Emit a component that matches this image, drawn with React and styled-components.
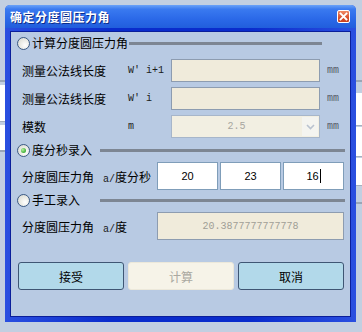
import React from 'react';
import styled, { createGlobalStyle } from 'styled-components';

const GlobalStyle = createGlobalStyle`
  html, body { margin: 0; padding: 0; }
  body {
    width: 362px;
    height: 332px;
    overflow: hidden;
    background: #c2cfe1;
    font-family: "Noto Sans CJK SC", "Liberation Sans", sans-serif;
    font-size: 12px;
    color: #000;
  }
`;

const Desktop = styled.div`
  position: relative;
  width: 362px;
  height: 332px;
  padding-top: 5px;
  box-sizing: border-box;
`;

// bits of the windows lying behind the dialog
const BackPane = styled.div`
  position: absolute;
  left: ${p => p.$left}px;
  top: ${p => p.$top}px;
  width: ${p => p.$w}px;
  height: ${p => p.$h}px;
  background: ${p => (p.$line ? '#9aa6b6' : '#fff')};
  border-bottom: ${p => (p.$line ? 'none' : '1px solid #a6b0be')};
`;

const Window = styled.div`
  position: relative;
  z-index: 1;
  margin-left: 5px;
  width: 351px;
  height: 317px;
  display: flex;
  flex-direction: column;
  background: linear-gradient(90deg, #2a4fe0 0%, #0a2ccc 30%, #0a2ccc 70%, #2a4fe0 100%);
  border-radius: 5px 5px 0 0;
`;

const TitleBar = styled.div`
  height: 23px;
  display: flex;
  align-items: center;
  justify-content: space-between;
  padding: 0 6px 0 5px;
  border-radius: 5px 5px 0 0;
  background: linear-gradient(180deg, #6aa2f8 0%, #3a7af0 18%, #2b69e8 60%, #215edc 100%);
`;

const Title = styled.span`
  color: #fff;
  font-weight: 700;
  font-size: 12px;
  letter-spacing: 0.5px;
  text-shadow: 1px 1px 0 #0c2c8a;
`;

const CloseBox = styled.span`
  width: 13px;
  height: 13px;
  box-sizing: border-box;
  border: 1px solid #fff;
  border-radius: 2px;
  background: linear-gradient(180deg, #f08a64 0%, #d9502c 60%, #c8401e 100%);
  display: flex;
  align-items: center;
  justify-content: center;
`;

const Content = styled.div`
  flex: 1;
  margin: 3px 5px 5px 5px;
  background: #b8cae3;
  display: flex;
  flex-direction: column;
  box-shadow: inset 0 0 0 1px #0a1e9a;
`;

const GroupHeader = styled.div`
  height: 14px;
  display: flex;
  align-items: center;
  padding-left: 7px;
  margin-top: ${p => p.$top}px;
`;

const Radio = styled.span`
  flex: none;
  width: 13px;
  height: 13px;
  box-sizing: border-box;
  border-radius: 50%;
  border: 1px solid #3c5a84;
  background: radial-gradient(circle at 65% 65%, #ffffff 0%, #e6e6df 60%, #cfd2cc 100%);
  display: flex;
  align-items: center;
  justify-content: center;

  &::after {
    content: '';
    display: ${p => (p.$checked ? 'block' : 'none')};
    width: 5px;
    height: 5px;
    border-radius: 50%;
    background: radial-gradient(circle at 35% 35%, #b9f0a0 0%, #4cb844 60%, #2a9a2a 100%);
  }
`;

const GroupTitle = styled.span`
  margin-left: 2px;
  min-width: 68px;
  line-height: 14px;
  white-space: nowrap;
`;

const Rule = styled.span`
  flex: 1;
  height: 3px;
  background: #7d8693;
  margin-right: ${p => p.$end}px;
  margin-left: ${p => p.$gap || 0}px;
`;

const MeasureRow = styled.div`
  display: grid;
  grid-template-columns: 106px 43px 149px auto;
  align-items: center;
  height: 23px;
  padding-left: 12px;
  margin-top: ${p => p.$top}px;
`;

const AngleRow = styled.div`
  display: grid;
  grid-template-columns: 81px 54px 187px;
  align-items: center;
  height: 28px;
  padding-left: 12px;
  margin-top: ${p => p.$top}px;
`;

const Label = styled.span`
  white-space: nowrap;
`;

const Sym = styled.span`
  font-family: "Liberation Mono", monospace;
  font-size: 10px;
  color: #1a1a1a;
  white-space: nowrap;
`;

const SymCjk = styled.span`
  font-family: "Noto Sans CJK SC", sans-serif;
  font-size: 12px;
  color: #000;
`;

const Unit = styled.span`
  margin-left: 7px;
  font-family: "Liberation Mono", monospace;
  font-size: 10px;
  color: #555b66;
`;

const Field = styled.div`
  height: ${p => p.$h || 23}px;
  box-sizing: border-box;
  border: 1px solid ${p => (p.$white ? '#7f9db9' : '#8d9cb0')};
  background: ${p => (p.$white ? '#fff' : '#f0ebdb')};
  display: flex;
  align-items: center;
  justify-content: center;
  font-family: ${p => (p.$mono ? '"Liberation Mono", monospace' : '"Liberation Sans", sans-serif')};
  font-size: ${p => (p.$mono ? 10 : 11)}px;
  color: ${p => (p.$muted ? '#a09e96' : '#000')};
`;

const Caret = styled.span`
  display: inline-block;
  width: 1px;
  height: 14px;
  background: #000;
  margin-left: 1px;
`;

const Combo = styled.div`
  height: 23px;
  box-sizing: border-box;
  border: 1px solid #a7b6ca;
  background: #f2efe2;
  display: flex;
  align-items: stretch;
`;

const ComboText = styled.span`
  flex: 1;
  display: flex;
  align-items: center;
  justify-content: center;
  font-family: "Liberation Mono", monospace;
  font-size: 10px;
  color: #a8a6a0;
`;

const ComboButton = styled.span`
  width: 16px;
  margin: 1px;
  background: #f4f4f0;
  display: flex;
  align-items: center;
  justify-content: center;
`;

const TripleInput = styled.div`
  display: grid;
  grid-template-columns: repeat(3, 1fr);
  column-gap: 2px;
`;

const ButtonRow = styled.div`
  display: grid;
  grid-template-columns: repeat(3, 106px);
  column-gap: 4px;
  padding-left: 8px;
  margin-top: 22px;
`;

const Button = styled.div`
  height: 28px;
  box-sizing: border-box;
  border-radius: 3px;
  display: flex;
  align-items: center;
  justify-content: center;
  font-size: 12px;
  border: 1px solid ${p => (p.$disabled ? '#ece8da' : '#3f5674')};
  background: ${p => (p.$disabled ? '#f6f3e8' : '#b2d9ea')};
  color: ${p => (p.$disabled ? '#aaa8a0' : '#000')};
`;

const CloseIcon = () => (
  <svg width="9" height="9" viewBox="0 0 9 9">
    <path d="M1.5 1.5 L7.5 7.5 M7.5 1.5 L1.5 7.5" stroke="#fff" strokeWidth="1.8" strokeLinecap="square" />
  </svg>
);

const Chevron = () => (
  <svg width="9" height="6" viewBox="0 0 9 6">
    <path d="M1 1 L4.5 4.5 L8 1" stroke="#b9c2cf" strokeWidth="1.6" fill="none" />
  </svg>
);

export default function App() {
  return (
    <>
      <GlobalStyle />
      <Desktop>
        <BackPane $left={0} $top={80} $w={6} $h={2} $line />
        <BackPane $left={0} $top={85} $w={6} $h={36} />
        <BackPane $left={0} $top={125} $w={6} $h={25} />
        <BackPane $left={0} $top={150} $w={6} $h={2} $line />
        <BackPane $left={355} $top={80} $w={7} $h={2} $line />
        <BackPane $left={355} $top={93} $w={7} $h={32} />
        <BackPane $left={355} $top={127} $w={7} $h={29} />
        <BackPane $left={355} $top={158} $w={7} $h={27} />
        <BackPane $left={355} $top={202} $w={7} $h={2} $line />

        <Window>
          <TitleBar>
            <Title>确定分度圆压力角</Title>
            <CloseBox><CloseIcon /></CloseBox>
          </TitleBar>

          <Content>
            <GroupHeader $top={5}>
              <Radio />
              <GroupTitle>计算分度圆压力角</GroupTitle>
              <Rule $end={29} $gap={1} />
            </GroupHeader>

            <MeasureRow $top={9}>
              <Label>测量公法线长度</Label>
              <Sym>W' i+1</Sym>
              <Field />
              <Unit>mm</Unit>
            </MeasureRow>
            <MeasureRow $top={5}>
              <Label>测量公法线长度</Label>
              <Sym>W' i</Sym>
              <Field />
              <Unit>mm</Unit>
            </MeasureRow>
            <MeasureRow $top={5}>
              <Label>模数</Label>
              <Sym>m</Sym>
              <Combo>
                <ComboText>2.5</ComboText>
                <ComboButton><Chevron /></ComboButton>
              </Combo>
              <Unit>mm</Unit>
            </MeasureRow>

            <GroupHeader $top={5}>
              <Radio $checked />
              <GroupTitle>度分秒录入</GroupTitle>
              <Rule $end={6} />
            </GroupHeader>

            <AngleRow $top={5}>
              <Label>分度圆压力角</Label>
              <Sym>a/<SymCjk>度分秒</SymCjk></Sym>
              <TripleInput>
                <Field $white $h={28}>20</Field>
                <Field $white $h={28}>23</Field>
                <Field $white $h={28}>16<Caret /></Field>
              </TripleInput>
            </AngleRow>

            <GroupHeader $top={3}>
              <Radio />
              <GroupTitle>手工录入</GroupTitle>
              <Rule $end={6} />
            </GroupHeader>

            <AngleRow $top={5}>
              <Label>分度圆压力角</Label>
              <Sym>a/<SymCjk>度</SymCjk></Sym>
              <Field $h={28} $mono $muted>20.3877777777778</Field>
            </AngleRow>

            <ButtonRow>
              <Button>接受</Button>
              <Button $disabled>计算</Button>
              <Button>取消</Button>
            </ButtonRow>
          </Content>
        </Window>
      </Desktop>
    </>
  );
}
